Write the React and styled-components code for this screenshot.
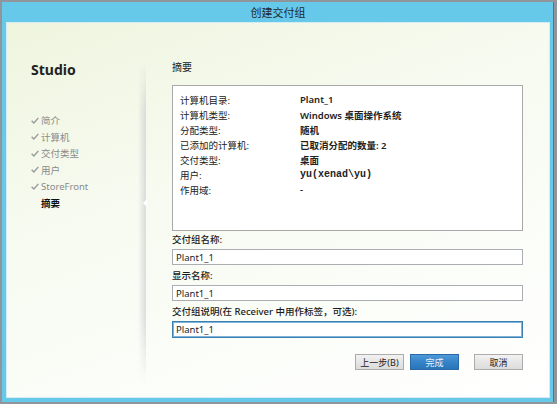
import React from "react";
import styled, { createGlobalStyle } from "styled-components";

const GlobalStyle = createGlobalStyle`
  html, body {
    margin: 0;
    padding: 0;
    background: #8f959a;
    font-family: "Noto Sans", "Noto Sans CJK SC", sans-serif;
  }
`;

const Window = styled.div`
  margin: 2px 0 0 2px;
  width: 552px;
  height: 400px;
  background: #66c9ea;
  border-right: 1px solid #3a7f99;
  box-sizing: border-box;
  display: flex;
  flex-direction: column;
  padding: 0 3px 4px 4px;
`;

const TitleBar = styled.div`
  height: 20px;
  display: flex;
  align-items: center;
  justify-content: center;
  font-size: 11px;
  color: #1f2a30;
`;

const Content = styled.div`
  flex: 1;
  display: flex;
  background: linear-gradient(160deg, #eef5de 0%, #f6faef 35%, #fbfdf8 70%, #ffffff 100%);
  border: 1px solid #d6ecf4;
  box-sizing: border-box;
`;

const Sidebar = styled.div`
  position: relative;
  width: 139px;
  flex-shrink: 0;
  padding: 38px 0 0 24px;
  box-sizing: border-box;

  &::after {
    content: "";
    position: absolute;
    right: 0;
    top: 40px;
    bottom: 14px;
    width: 8px;
    background: linear-gradient(90deg, rgba(255,255,255,0) 0%, rgba(190,195,200,0.55) 100%);
    -webkit-mask-image: linear-gradient(180deg, transparent 0%, #000 15%, #000 80%, transparent 100%);
    mask-image: linear-gradient(180deg, transparent 0%, #000 15%, #000 80%, transparent 100%);
  }
`;

const Notch = styled.div`
  position: absolute;
  right: -1px;
  top: 176px;
  width: 0;
  height: 0;
  border-top: 4px solid transparent;
  border-bottom: 4px solid transparent;
  border-right: 4px solid #ffffff;
  z-index: 1;
`;

const Brand = styled.div`
  font-size: 14px;
  font-weight: 700;
  color: #222;
  line-height: 18px;
  margin-bottom: 33px;
`;

const NavList = styled.div`
  display: flex;
  flex-direction: column;
`;

const NavItem = styled.div`
  display: flex;
  align-items: center;
  height: 16.5px;
  font-size: 9.5px;
  color: ${(p) => (p.$active ? "#111" : "#8a8a8a")};
  font-weight: ${(p) => (p.$active ? 700 : 400)};
`;

const Check = styled.span`
  width: 10px;
  display: inline-flex;
  align-items: center;
  svg {
    width: 8px;
    height: 7px;
  }
`;

const Main = styled.div`
  flex: 1;
  display: flex;
  flex-direction: column;
  padding: 37px 26px 0 26px;
`;

const Heading = styled.div`
  font-size: 10px;
  line-height: 14px;
  color: #222;
`;

const SummaryBox = styled.div`
  margin-top: 11px;
  height: 146px;
  border: 1px solid #a9a9a9;
  background: #fff;
  box-sizing: border-box;
  padding: 6px 0 0 7px;
`;

const Row = styled.div`
  display: grid;
  grid-template-columns: 120px 1fr;
  height: 15px;
  align-items: center;
  font-size: 9.5px;
  color: #222;
`;

const Value = styled.span`
  font-weight: ${(p) => (p.$mono ? 700 : 600)};
  font-family: ${(p) => (p.$mono ? '"Liberation Mono", "Noto Sans CJK SC", monospace' : "inherit")};
  font-size: ${(p) => (p.$mono ? "10px" : "inherit")};
`;

const Field = styled.div`
  display: flex;
  flex-direction: column;
  margin-top: ${(p) => p.$top}px;
`;

const Label = styled.div`
  font-size: 9.5px;
  line-height: 13px;
  font-weight: 500;
  color: #1a1a1a;
`;

const Input = styled.div`
  margin-top: 3px;
  height: ${(p) => (p.$focus ? 17 : 16)}px;
  box-sizing: border-box;
  border: 1px solid ${(p) => (p.$focus ? "#3c7fb1" : "#abadb3")};
  box-shadow: ${(p) => (p.$focus ? "inset 0 0 0 1px #7fb4da" : "none")};
  background: #fff;
  font-size: 9.5px;
  display: flex;
  align-items: center;
  padding-left: 3px;
  color: #222;
`;

const ButtonRow = styled.div`
  display: flex;
  justify-content: flex-end;
  margin-top: 16px;
  gap: 6px;
`;

const Button = styled.div`
  width: 49px;
  height: 16px;
  box-sizing: border-box;
  display: flex;
  align-items: center;
  justify-content: center;
  font-size: 9px;
  border: 1px solid ${(p) => (p.$primary ? "#2a6aa6" : "#acacac")};
  background: ${(p) =>
    p.$primary
      ? "linear-gradient(180deg, #4d9ad8 0%, #3584c8 50%, #2b74b8 100%)"
      : "linear-gradient(180deg, #f2f2f2 0%, #e6e6e6 50%, #dcdcdc 100%)"};
  color: ${(p) => (p.$primary ? "#e8f2fb" : "#222")};
  margin-left: ${(p) => p.$gap || 0}px;
`;

const CheckIcon = () => (
  <svg viewBox="0 0 8 7">
    <path d="M0.6 3.8 L2.9 6 L7.4 0.9" fill="none" stroke="#9a9a9a" strokeWidth="1.4" />
  </svg>
);

const navItems = ["简介", "计算机", "交付类型", "用户", "StoreFront"];

const summary = [
  ["计算机目录:", "Plant_1"],
  ["计算机类型:", "Windows 桌面操作系统"],
  ["分配类型:", "随机"],
  ["已添加的计算机:", "已取消分配的数量: 2"],
  ["交付类型:", "桌面"],
  ["用户:", "yu(xenad\\yu)", true],
  ["作用域:", "-"],
];

export default function App() {
  return (
    <>
      <GlobalStyle />
      <Window>
        <TitleBar>创建交付组</TitleBar>
        <Content>
          <Sidebar>
            <Brand>Studio</Brand>
            <NavList>
              {navItems.map((n) => (
                <NavItem key={n}>
                  <Check>
                    <CheckIcon />
                  </Check>
                  {n}
                </NavItem>
              ))}
              <NavItem $active>
                <Check />
                摘要
              </NavItem>
            </NavList>
            <Notch />
          </Sidebar>
          <Main>
            <Heading>摘要</Heading>
            <SummaryBox>
              {summary.map(([k, v, mono]) => (
                <Row key={k}>
                  <span>{k}</span>
                  <Value $mono={mono}>{v}</Value>
                </Row>
              ))}
            </SummaryBox>
            <Field $top={2}>
              <Label>交付组名称:</Label>
              <Input>Plant1_1</Input>
            </Field>
            <Field $top={4}>
              <Label>显示名称:</Label>
              <Input>Plant1_1</Input>
            </Field>
            <Field $top={4}>
              <Label>交付组说明(在 Receiver 中用作标签，可选):</Label>
              <Input $focus>Plant1_1</Input>
            </Field>
            <ButtonRow>
              <Button>上一步(B)</Button>
              <Button $primary>完成</Button>
              <Button $gap={9}>取消</Button>
            </ButtonRow>
          </Main>
        </Content>
      </Window>
    </>
  );
}
